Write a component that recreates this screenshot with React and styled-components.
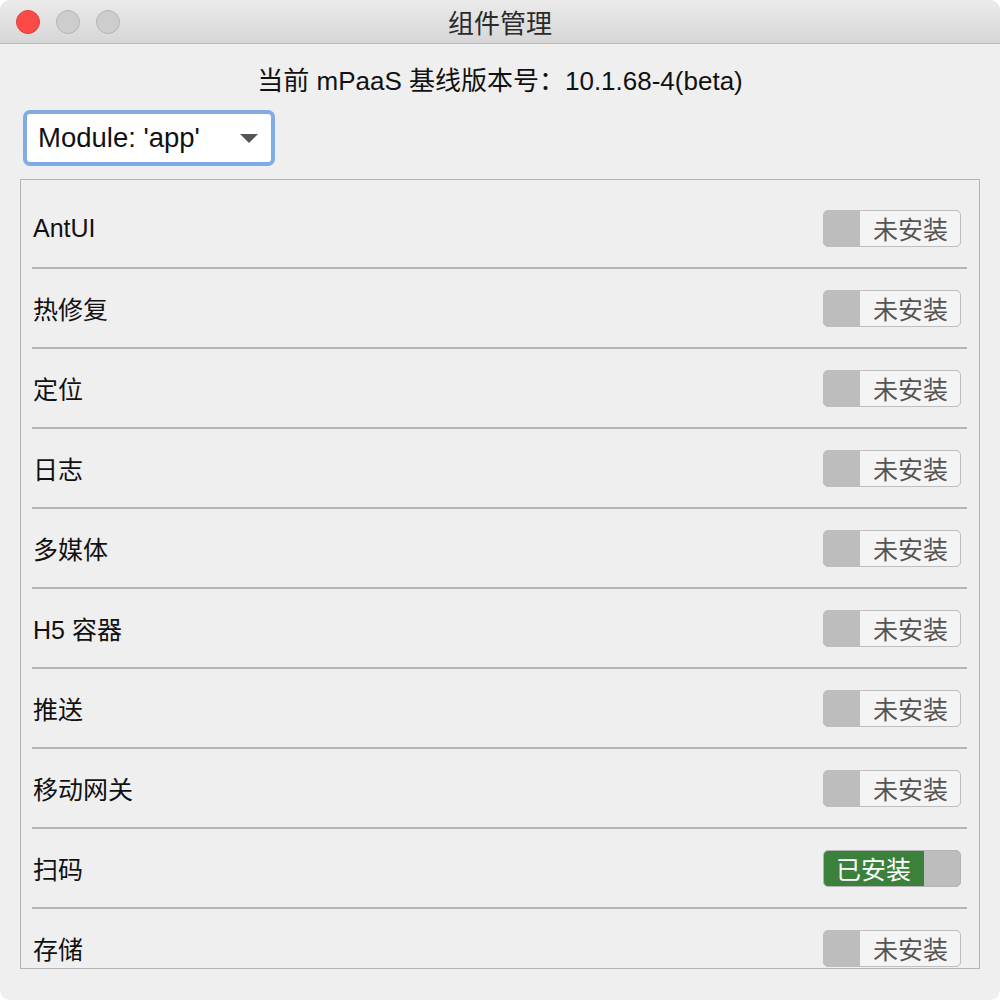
import React from 'react';
import styled, { createGlobalStyle } from 'styled-components';

const GlobalStyle = createGlobalStyle`
    html, body {
        margin: 0;
        padding: 0;
        background: #ffffff;
    }
    body {
        font-family: 'Liberation Sans', 'Noto Sans CJK SC', sans-serif;
    }
`

const Window = styled.div`
    width: 1000px;
    height: 1000px;
    display: flex;
    flex-direction: column;
    background-color: #efefef;
    border-radius: 10px;
    overflow: hidden;
    box-sizing: border-box;
`
const TitleBar = styled.div`
    position: relative;
    height: 43px;
    flex-shrink: 0;
    display: flex;
    align-items: center;
    justify-content: center;
    background: linear-gradient(#ebebeb, #d6d6d6);
    border-bottom: 1px solid #b9b9b9;
`
const Lights = styled.div`
    position: absolute;
    left: 16px;
    top: 10px;
    display: flex;
    gap: 16px;
`
const Light = styled.span`
    width: 24px;
    height: 24px;
    border-radius: 50%;
    box-sizing: border-box;
    background-color: ${p => p.red ? '#fc4b47' : '#cdcdcd'};
    border: 1px solid ${p => p.red ? '#de3f3a' : '#b5b5b5'};
`
const Title = styled.div`
    font-size: 26px;
    color: #2a2a2a;
`
const Header = styled.div`
    padding-top: 22px;
    line-height: 30px;
    font-size: 26px;
    color: #111;
    text-align: center;
`
const SelectRow = styled.div`
    margin-top: 14px;
    padding-left: 23px;
    display: flex;
`
const SelectRing = styled.div`
    width: 252px;
    height: 56px;
    box-sizing: border-box;
    padding: 4px;
    border-radius: 7px;
    background-color: #80ace6;
`
const SelectBox = styled.div`
    height: 100%;
    box-sizing: border-box;
    display: flex;
    align-items: center;
    justify-content: space-between;
    padding: 0 13px 0 11px;
    background-color: #ffffff;
    border-radius: 3px;
    font-size: 27.5px;
    color: #111;
`
const Caret = styled.span`
    width: 0;
    height: 0;
    border-left: 9px solid transparent;
    border-right: 9px solid transparent;
    border-top: 9px solid #555;
`
const Panel = styled.div`
    margin: 13px 20px 0 20px;
    height: 790px;
    box-sizing: border-box;
    border: 1px solid #b4b4b4;
    padding: 9px 12px 0 11px;
    overflow: hidden;
`
const Row = styled.div`
    height: 80px;
    flex-shrink: 0;
    box-sizing: border-box;
    display: flex;
    align-items: center;
    justify-content: space-between;
    border-bottom: 2px solid #b4b4b4;
    padding: 0 6px 0 1px;
`
const Label = styled.span`
    font-size: 25px;
    color: #111;
`
const Toggle = styled.div`
    width: 138px;
    height: 37px;
    box-sizing: border-box;
    display: flex;
    flex-direction: ${p => p.on ? 'row' : 'row-reverse'};
    border-radius: 5px;
    border: 1px solid ${p => p.on ? '#b4b4b4' : '#bdbdbd'};
    background-color: #bdbdbd;
    overflow: hidden;
`
const ToggleText = styled.span`
    flex: 1;
    display: flex;
    align-items: center;
    justify-content: ${p => p.on ? 'flex-start' : 'flex-end'};
    padding: ${p => p.on ? '0 0 0 12px' : '0 12px 0 0'};
    font-size: 25px;
    color: ${p => p.on ? '#ffffff' : '#555'};
    background-color: ${p => p.on ? '#3b813b' : '#f4f4f4'};
    border-radius: ${p => p.on ? '4px 0 0 4px' : '0 4px 4px 0'};
`
const Knob = styled.span`
    width: 36px;
`

const modules = [
    { name: 'AntUI', on: false },
    { name: '热修复', on: false },
    { name: '定位', on: false },
    { name: '日志', on: false },
    { name: '多媒体', on: false },
    { name: 'H5 容器', on: false },
    { name: '推送', on: false },
    { name: '移动网关', on: false },
    { name: '扫码', on: true },
    { name: '存储', on: false },
];

export default function App() {
    return (
        <Window>
            <GlobalStyle />
            <TitleBar>
                <Lights>
                    <Light red />
                    <Light />
                    <Light />
                </Lights>
                <Title>组件管理</Title>
            </TitleBar>
            <Header>当前 mPaaS 基线版本号：10.1.68-4(beta)</Header>
            <SelectRow>
                <SelectRing>
                    <SelectBox>
                        <span>Module: 'app'</span>
                        <Caret />
                    </SelectBox>
                </SelectRing>
            </SelectRow>
            <Panel>
                {modules.map(m => (
                    <Row key={m.name}>
                        <Label>{m.name}</Label>
                        <Toggle on={m.on}>
                            <ToggleText on={m.on}>{m.on ? '已安装' : '未安装'}</ToggleText>
                            <Knob />
                        </Toggle>
                    </Row>
                ))}
            </Panel>
        </Window>
    );
}
